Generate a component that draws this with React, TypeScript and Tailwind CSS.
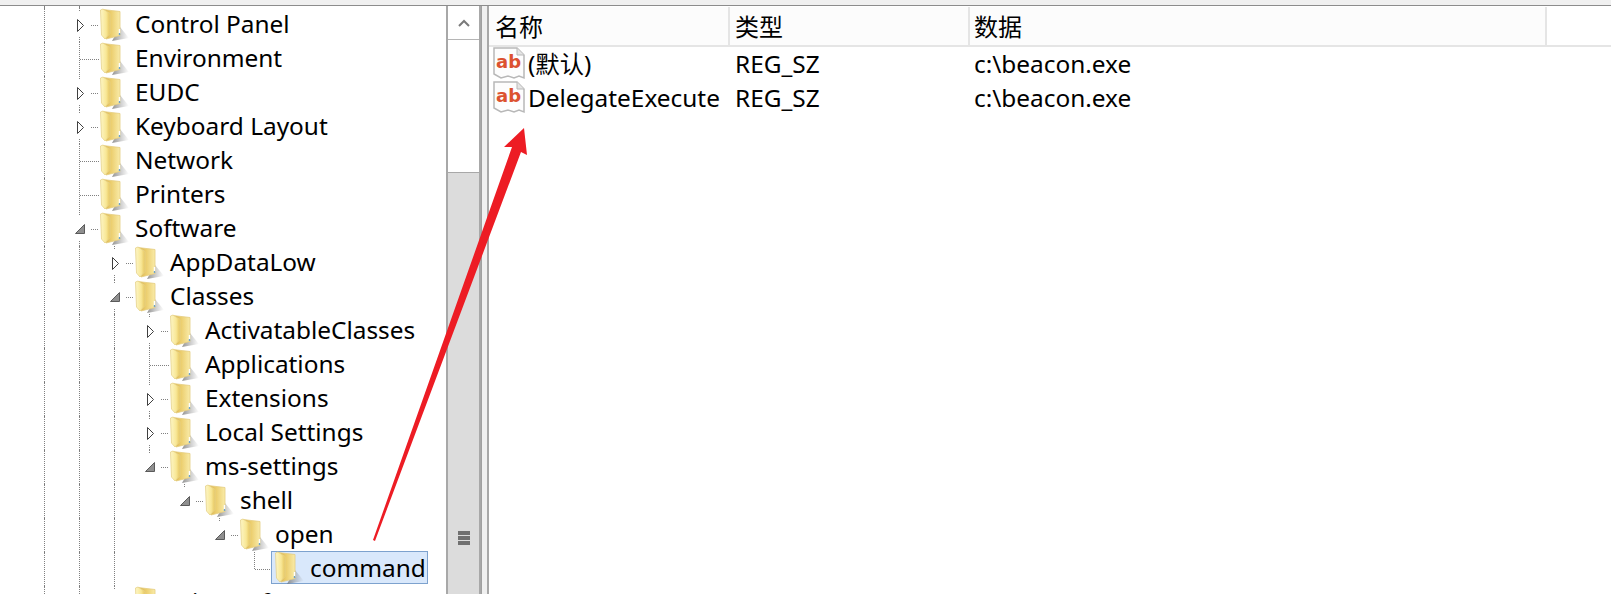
type Expander = "closed" | "open" | null;

interface TreeRow {
  label: string;
  level: number;
  expander: Expander;
  last?: boolean;
  selected?: boolean;
  guides: boolean[];
}

const g1 = [true];
const g2 = [true, true];
const g3 = [true, true, true];

const rows: TreeRow[] = [
  { label: "Control Panel", level: 0, expander: "closed", guides: g1 },
  { label: "Environment", level: 0, expander: null, guides: g1 },
  { label: "EUDC", level: 0, expander: "closed", guides: g1 },
  { label: "Keyboard Layout", level: 0, expander: "closed", guides: g1 },
  { label: "Network", level: 0, expander: null, guides: g1 },
  { label: "Printers", level: 0, expander: null, guides: g1 },
  { label: "Software", level: 0, expander: "open", guides: g1 },
  { label: "AppDataLow", level: 1, expander: "closed", guides: g2 },
  { label: "Classes", level: 1, expander: "open", guides: g2 },
  { label: "ActivatableClasses", level: 2, expander: "closed", guides: g3 },
  { label: "Applications", level: 2, expander: null, guides: g3 },
  { label: "Extensions", level: 2, expander: "closed", guides: g3 },
  { label: "Local Settings", level: 2, expander: "closed", guides: g3 },
  { label: "ms-settings", level: 2, expander: "open", last: true, guides: g3 },
  { label: "shell", level: 3, expander: "open", last: true, guides: [true, true, true, false] },
  { label: "open", level: 4, expander: "open", last: true, guides: [true, true, true, false, false] },
  { label: "command", level: 5, expander: null, last: true, selected: true, guides: [true, true, true, false, false, false] },
  { label: "Microsoft", level: 1, expander: "closed", guides: g2 },
];

const values = [
  { name: "(默认)", type: "REG_SZ", data: "c:\\beacon.exe" },
  { name: "DelegateExecute", type: "REG_SZ", data: "c:\\beacon.exe" },
];

export default function App() {
  return (
    <div className="relative h-[594px] w-[1611px] overflow-hidden bg-white font-['Noto_Sans','Noto_Sans_CJK_SC',sans-serif] text-[24.4px] text-black">
      <div className="h-[5px] bg-[#f0f0f0]" />
      <div className="h-[1px] bg-[#8c8c8c]" />
      <div className="flex h-[588px]">
        <TreePane />
        <ScrollBar />
        <div className="w-[6px] border-l border-[#a0a0a0] bg-[#f0f0f0]" />
        <ListPane />
      </div>
      <RedArrow />
    </div>
  );
}

function TreePane() {
  return (
    <div className="w-[446px] shrink-0 overflow-hidden">
      <div className="flex h-[2px]">
        <div className="w-[44px] shrink-0" />
        <Guide on />
        <Guide on />
      </div>
      {rows.map((row) => (
        <Row key={row.label} row={row} />
      ))}
    </div>
  );
}

function Guide({ on }: { on: boolean }) {
  return <div className={on ? "w-[35px] shrink-0 border-l border-dotted border-[#808080]" : "w-[35px] shrink-0"} />;
}

function Row({ row }: { row: TreeRow }) {
  return (
    <div className="flex h-[34px] whitespace-nowrap">
      <div className="w-[44px] shrink-0" />
      {row.guides.map((on, i) => (
        <Guide key={i} on={on} />
      ))}
      <Connector expander={row.expander} last={row.last} />
      {row.selected ? (
        <div className="-mt-[1px] -ml-[4px] flex h-[33px] items-center border border-[#7da2ce] bg-[#d9e8fb] pr-[1px] pl-[3px]">
          <FolderIcon />
          <span className="leading-[32px]">{row.label}</span>
        </div>
      ) : (
        <div className="flex items-center">
          <FolderIcon />
          <span className="-mt-[2px] leading-[34px]">{row.label}</span>
        </div>
      )}
    </div>
  );
}

function Connector({ expander, last }: { expander: Expander; last?: boolean }) {
  const dots = { stroke: "#808080", strokeDasharray: "1 1", fill: "none" };
  return (
    <svg width="21" height="34" viewBox="0 0 21 34" className="shrink-0 overflow-visible">
      {expander ? (
        <>
          <path d="M0.5 0V4" {...dots} />
          {!last && <path d="M0.5 29V34" {...dots} />}
          <path d="M12 17.5H20" {...dots} />
        </>
      ) : (
        <>
          <path d={last ? "M0.5 0V17" : "M0.5 0V34"} {...dots} />
          <path d="M1 17.5H21" {...dots} />
        </>
      )}
      {expander === "closed" && <path d="M-1.5 11.5L4.5 17.5L-1.5 23.5Z" fill="#fff" stroke="#404040" />}
      {expander === "open" && <path d="M5.5 12.5V21.5H-3.5Z" fill="#8f8f8f" stroke="#5a5a5a" />}
    </svg>
  );
}

function FolderIcon() {
  return (
    <svg width="35" height="34" viewBox="0 0 35 34" className="shrink-0">
      <defs>
        <linearGradient id="folderBack" x1="0" x2="1" y1="0" y2="0">
          <stop offset="0" stopColor="#d9b044" />
          <stop offset="0.5" stopColor="#eccf70" />
          <stop offset="1" stopColor="#f9eba8" />
        </linearGradient>
        <linearGradient id="folderDoor" x1="0" x2="1" y1="0" y2="0">
          <stop offset="0" stopColor="#fdf6c6" />
          <stop offset="0.6" stopColor="#f8e796" />
          <stop offset="1" stopColor="#e6c55c" />
        </linearGradient>
        <linearGradient id="folderShadow" x1="0" x2="1" y1="0" y2="0">
          <stop offset="0" stopColor="#777777" stopOpacity="0.8" />
          <stop offset="1" stopColor="#8a8a8a" stopOpacity="0" />
        </linearGradient>
      </defs>
      <path d="M20 19L29 30L12 33Z" fill="url(#folderShadow)" />
      <path d="M3 1.5L20 3.5V27.5L6 31Z" fill="url(#folderBack)" stroke="#e4cd80" strokeWidth="0.8" />
      <path d="M0.5 2L3 1L10 5.5V25.5L5 31L1.5 27Z" fill="url(#folderDoor)" stroke="#e6d28a" strokeWidth="0.8" />
      <path d="M19.5 21V26" stroke="#ffffff" strokeWidth="1.4" />
      <path d="M19.5 25V27" stroke="#6fa3c9" strokeWidth="1.4" />
    </svg>
  );
}

function ScrollBar() {
  return (
    <div className="flex h-full w-[35px] shrink-0 flex-col border-x-2 border-[#a8a8a8] bg-white">
      <div className="flex h-[34px] shrink-0 items-center justify-center border-b border-[#b5b5b5]">
        <svg width="12" height="8" viewBox="0 0 12 8" fill="none" stroke="#7a7a7a" strokeWidth="2">
          <path d="M1 7L6 2L11 7" />
        </svg>
      </div>
      <div className="h-[132px] shrink-0" />
      <div className="flex flex-1 items-end justify-center border-t border-[#a8a8a8] bg-[#dcdcdc] pb-[49px]">
        <div className="flex w-[12px] flex-col gap-[1px]">
          <div className="h-[4px] bg-[#707070]" />
          <div className="h-[4px] bg-[#707070]" />
          <div className="h-[4px] bg-[#707070]" />
        </div>
      </div>
    </div>
  );
}

function ListPane() {
  return (
    <div className="min-w-0 flex-1 border-l-2 border-[#a8a8a8] pt-[1px]">
      <div className="flex h-[40px] border-b-2 border-[#e5e5e5] font-['Noto_Sans_CJK_SC','Noto_Sans',sans-serif] text-[24px]">
        <HeaderCell className="w-[241px] pl-[6px]" text="名称" />
        <HeaderCell className="w-[240px] pl-[5px]" text="类型" />
        <HeaderCell className="w-[577px] pl-[4px]" text="数据" />
        <div className="flex-1" />
      </div>
      {values.map((value) => (
        <div key={value.name} className="flex h-[34px] items-center whitespace-nowrap">
          <div className="flex w-[241px] items-center pl-[4px]">
            <RegIcon />
            <span className="ml-[2px]">{value.name}</span>
          </div>
          <div className="w-[240px] pl-[5px]">{value.type}</div>
          <div className="pl-[4px]">{value.data}</div>
        </div>
      ))}
    </div>
  );
}

function HeaderCell({ className, text }: { className: string; text: string }) {
  return <div className={`flex items-center border-r-2 border-[#e5e5e5] bg-[#fcfcfc] ${className}`}>{text}</div>;
}

function RegIcon() {
  return (
    <svg width="33" height="33" viewBox="0 0 33 33" className="-mt-[2px] shrink-0">
      <path
        d="M1 1H24L31 8V31L26 29L21 31L15 29L8 31L1 27Z"
        fill="#fdfdfd"
        stroke="#b8b8b8"
        strokeWidth="1.5"
      />
      <path d="M24 1V8H31" fill="#e4e4e4" stroke="#b8b8b8" />
      <text x="3" y="21" fontFamily="'DejaVu Sans', sans-serif" fontWeight="700" fontSize="18" fill="#dc5230">
        ab
      </text>
    </svg>
  );
}

function RedArrow() {
  return (
    <svg width="1611" height="594" viewBox="0 0 1611 594" className="pointer-events-none absolute top-0 left-0">
      <path d="M373 540L512 147L504 147L524 128L527 155L521 152L375 541Z" fill="#ed1c24" />
    </svg>
  );
}
